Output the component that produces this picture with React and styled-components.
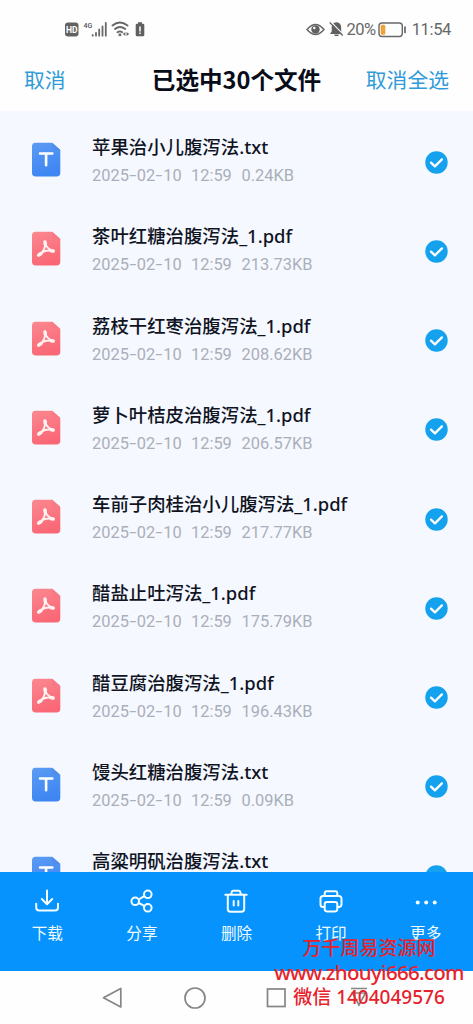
import React from "react";
import styled, { createGlobalStyle } from "styled-components";

const Global = createGlobalStyle`
  * { box-sizing: border-box; }
  html, body { margin: 0; padding: 0; background: #fff; }
  body { font-family: Roboto, "Noto Sans CJK SC", sans-serif; }
  svg { display: block; flex: none; }
`;

const Screen = styled.div`
  position: relative;
  width: 473px;
  height: 1024px;
  overflow: hidden;
  display: flex;
  flex-direction: column;
  background: #fefefe;
`;

const StatusBar = styled.div`
  height: 58px;
  flex: none;
  padding: 1px 22px 0 64px;
  display: flex;
  align-items: center;
  justify-content: space-between;
  color: #686868;
`;

const StatusGroup = styled.div`
  display: flex;
  align-items: center;
`;

const StatusText = styled.span`
  font-size: 16.5px;
  line-height: 20px;
  padding-top: 1px;
  letter-spacing: ${(p) => p.$spacing || "0"};
  margin: 0 ${(p) => p.$after || "0"} 0 ${(p) => p.$gap};
  white-space: nowrap;
`;

const Header = styled.header`
  height: 53px;
  flex: none;
  padding: 0 24px 11px;
  display: flex;
  align-items: center;
  justify-content: space-between;
`;

const HeaderAction = styled.button`
  width: 84px;
  border: 0;
  padding: 0;
  background: none;
  font: 400 20.8px/30px "Noto Sans CJK SC", sans-serif;
  color: #2f9bd9;
  text-align: ${(p) => p.$align};
  white-space: nowrap;
`;

const Title = styled.h1`
  margin: 0;
  font: 700 23.6px/32px "Noto Sans CJK SC", sans-serif;
  color: #080c18;
  white-space: nowrap;
`;

const FileList = styled.main`
  height: 761px;
  flex: none;
  overflow: hidden;
  background: #f5f8ff;
`;

const FileRow = styled.div`
  height: 89.25px;
  padding: 0 25px 0 31px;
  display: flex;
  align-items: flex-start;
`;

const FileIcon = styled.div`
  margin-top: 31px;
  width: 61px;
  flex: none;
`;

const FileInfo = styled.div`
  flex: 1;
  padding-top: 21px;
`;

const FileName = styled.div`
  height: 28px;
  font: 500 18.4px/28px "Noto Sans CJK SC", sans-serif;
  color: #10141f;
  white-space: nowrap;
`;

const Extension = styled.span`
  font-family: "Noto Sans", sans-serif;
  font-weight: 500;
`;

const Meta = styled.div`
  margin-top: 6px;
  display: grid;
  grid-template-columns: 99px 50.5px auto;
  font: 400 16.4px/20px Roboto, sans-serif;
  color: #aaafb9;
  white-space: nowrap;
`;

const Dash = styled.span`
  display: inline-block;
  width: 8px;
  text-align: center;
  transform: scaleX(1.5);
`;

const Check = styled.div`
  margin-top: 39.500px;
`;

const Toolbar = styled.nav`
  height: 99px;
  flex: none;
  display: grid;
  grid-template-columns: repeat(5, 1fr);
  background: #0693fe;
`;

const ToolButton = styled.button`
  border: 0;
  padding: 16px 0 0;
  background: none;
  display: flex;
  flex-direction: column;
  align-items: center;
  gap: 6px;
  color: #f0fbff;
  font: 400 15.6px/24px "Noto Sans CJK SC", sans-serif;
`;

const SystemNav = styled.div`
  flex: 1;
  padding: 0 103px 0 101px;
  display: grid;
  grid-template-columns: 81.5px 82.5px 83px auto;
  align-items: center;
`;

const Watermark = styled.div`
  position: absolute;
  left: 274px;
  top: 936px;
  width: 190px;
  display: flex;
  flex-direction: column;
  align-items: center;
  color: #e6222b;
  white-space: nowrap;
`;

const MarkLine = styled.div`
  font: ${(p) => p.$weight || 500} ${(p) => p.$size}/24.300px "Noto Sans", "Noto Sans CJK SC", sans-serif;
  letter-spacing: ${(p) => p.$spacing || "0"};
`;

const files = [
  ["苹果治小儿腹泻法", "txt", "0.24KB"],
  ["茶叶红糖治腹泻法", "pdf", "213.73KB"],
  ["荔枝干红枣治腹泻法", "pdf", "208.62KB"],
  ["萝卜叶桔皮治腹泻法", "pdf", "206.57KB"],
  ["车前子肉桂治小儿腹泻法", "pdf", "217.77KB"],
  ["醋盐止吐泻法", "pdf", "175.79KB"],
  ["醋豆腐治腹泻法", "pdf", "196.43KB"],
  ["馒头红糖治腹泻法", "txt", "0.09KB"],
  ["高粱明矾治腹泻法", "txt", null],
];

const DocIcon = ({ type }) => {
  const pdf = type === "pdf";
  const id = pdf ? "docPdf" : "docTxt";
  return (
    <svg width="30" height="35" viewBox="0 0 30 35">
      <defs>
        <linearGradient id={id} x1="0" y1="0" x2="0.3" y2="1">
          <stop offset="0" stopColor={pdf ? "#fb8890" : "#5b9bf3"} />
          <stop offset="1" stopColor={pdf ? "#fa6876" : "#3e86f2"} />
        </linearGradient>
      </defs>
      <path d="M4.5.8H21.200L29.300 8V30.800a3.800 3.800 0 0 1-3.800 3.800H4.800A3.800 3.800 0 0 1 1 30.800V4.600A3.800 3.800 0 0 1 4.500.8Z" fill={`url(#${id})`} />
      <path d="M21.200.8 29.300 8h-5.800a2.300 2.300 0 0 1-2.300-2.300Z" fill={pdf ? "#f77984" : "#4f8ee8"} />
      {pdf ? (
        <g fill="none" stroke="#fff3f2" strokeLinecap="round" strokeLinejoin="round">
          <path d="M14 10.700C14.700 15.500 17 18.600 22.300 19.900M14 10.700C15 15.500 12.500 21.500 7.800 24.200M7.800 24.200C11 20.700 16 18.800 22.300 19.900" strokeWidth="1.900" />
          <path d="M14 10.900l.3 2.500M7.700 24.200l2.300-1.700M20.200 19.800l2 .3" strokeWidth="3.500" />
        </g>
      ) : (
        <path d="M9 11.500H21.300M15.100 11.500V23.300" fill="none" stroke="#fff" strokeWidth="2.600" strokeLinecap="round" />
      )}
    </svg>
  );
};

const CheckIcon = () => (
  <svg width="23" height="23" viewBox="0 0 23 23">
    <circle cx="11.5" cy="11.5" r="11.2" fill="#14a1ee" />
    <path d="M6 11.600l3.900 3.800 7-7" fill="none" stroke="#fff" strokeWidth="2.300" strokeLinecap="round" strokeLinejoin="round" />
  </svg>
);

const toolProps = { width: 26, height: 26, viewBox: "0 0 26 26", fill: "none", stroke: "#f4fdff", strokeWidth: 2, strokeLinecap: "round", strokeLinejoin: "round" };

const tools = [
  ["下载", <path key="d" d="M13 2.500V16M7.800 11l5.200 5.200 5.200-5.200M2.200 15.800v3.700a3 3 0 0 0 3 3H21a3 3 0 0 0 3-3v-3.700" />],
  ["分享", <g key="s"><circle cx="6.200" cy="13.300" r="3.800" /><circle cx="18.800" cy="6.300" r="3.800" /><circle cx="18.800" cy="19.800" r="3.800" /><path d="M9.700 11.500l5.600-3.300M9.700 15l5.700 2.900" /></g>],
  ["删除", <path key="t" d="M2.300 6.700H23.700M8 6.500l.8-2.600a1.500 1.500 0 0 1 1.400-1.100h5.600a1.500 1.500 0 0 1 1.400 1.100l.8 2.600M4.800 7v14a2.800 2.800 0 0 0 2.800 2.800h10.800a2.800 2.800 0 0 0 2.800-2.800V7M10.700 13v4.500M15.300 13v4.500" />],
  ["打印", <g key="p"><path d="M6.700 8V5.200a2 2 0 0 1 2-2h8.600a2 2 0 0 1 2 2V8M6.300 19H5a2.500 2.500 0 0 1-2.500-2.500v-6A2.500 2.500 0 0 1 5 8h16a2.500 2.500 0 0 1 2.500 2.500v6A2.500 2.500 0 0 1 21 19h-1.300" /><rect x="6.700" y="14" width="12.600" height="9.400" rx="2.300" /></g>],
  ["更多", <g key="m" fill="#f4fdff" stroke="none"><circle cx="4.700" cy="14.500" r="2" /><circle cx="13.200" cy="14.500" r="2" /><circle cx="21.700" cy="14.500" r="2" /></g>],
];

const SignalIcons = () => (
  <svg width="84" height="22" viewBox="64 19 84 22">
    <rect x="65" y="22.500" width="13.500" height="14" rx="3" fill="#626262" />
    <text x="71.700" y="32.800" textAnchor="middle" fontFamily="Roboto, sans-serif" fontWeight="700" fontSize="8.500" fill="#fff">HD</text>
    <text x="83.500" y="27.500" fontFamily="Roboto, sans-serif" fontWeight="500" fontSize="7" fill="#555">4G</text>
    <path d="M92.700 35v.7M96 33v2.700M99.200 29.500v6.200M102.500 26.500v9.200M105.800 23v12.700" stroke="#686868" strokeWidth="1.800" strokeLinecap="round" />
    <g fill="none" stroke="#686868" strokeWidth="1.900" strokeLinecap="round">
      <path d="M112.500 25.500q7.300-5.800 15 0M115 29q5-4 10.200 0M117.500 32.200q2.500-1.700 4.700 0" />
      <circle cx="119.900" cy="34.800" r=".6" />
    </g>
    <path d="M122.800 34l2.600-1.900v3.800zM129.200 34l-2.600-1.900v3.800z" fill="#686868" />
    <path d="M138 22.300h4v1.500h1a1.300 1.300 0 0 1 1.300 1.300v9.800a1.300 1.300 0 0 1-1.300 1.300h-6a1.300 1.300 0 0 1-1.300-1.300v-9.800a1.300 1.300 0 0 1 1.300-1.300h1z" fill="#606060" />
    <path d="M140 27v4M140 33v.4" stroke="#fff" strokeWidth="1.500" strokeLinecap="round" />
  </svg>
);

const EyeBell = () => (
  <svg width="38" height="20" viewBox="304 20 38 20">
    <path d="M305 29.500q8.500-10 17 0-8.500 10-17 0z" fill="none" stroke="#686868" strokeWidth="1.500" />
    <circle cx="313.500" cy="29.500" r="4.200" fill="#606060" />
    <circle cx="312.300" cy="28" r="1.200" fill="#fff" />
    <path d="M334.500 22.200c3.500.3 4.700 2.800 4.700 5.500v3.800l1.800 2.500h-13l1.700-2.500v-3.800c0-2.700 1.300-5.200 4.800-5.500z" fill="#606060" />
    <path d="M332.500 35.300h4" stroke="#606060" strokeWidth="1.500" />
    <path d="M328.700 21.700l13 13.300" stroke="#fff" strokeWidth="1.300" />
    <path d="M327.700 22.500l13 13" stroke="#606060" strokeWidth="1.300" />
  </svg>
);

const BatteryIcon = () => (
  <svg width="29" height="16" viewBox="0 0 29 16">
    <rect x="1" y="1" width="23.300" height="13.500" rx="3" fill="none" stroke="#686868" strokeWidth="1.400" />
    <rect x="2.700" y="2.700" width="4.600" height="10" rx="1.500" fill="#efa33a" />
    <path d="M27 5v5.500" stroke="#686868" strokeWidth="1.700" strokeLinecap="round" />
  </svg>
);

export default function App() {
  return (
    <Screen>
      <Global />
      <StatusBar>
        <SignalIcons />
        <StatusGroup>
          <EyeBell />
          <StatusText $gap="3px" $spacing="-0.5px" $after="2px">20%</StatusText>
          <BatteryIcon />
          <StatusText $gap="5px" $spacing="-0.35px">11:54</StatusText>
        </StatusGroup>
      </StatusBar>
      <Header>
        <HeaderAction $align="left">取消</HeaderAction>
        <Title>已选中30个文件</Title>
        <HeaderAction $align="right">取消全选</HeaderAction>
      </Header>
      <FileList>
        {files.map(([name, type, size]) => (
          <FileRow key={name}>
            <FileIcon><DocIcon type={type} /></FileIcon>
            <FileInfo>
              <FileName>
                {name}
                <Extension>{type === "pdf" ? "_1.pdf" : ".txt"}</Extension>
              </FileName>
              {size && (
                <Meta>
                  <span>2025<Dash>-</Dash>02<Dash>-</Dash>10</span>
                  <span>12:59</span>
                  <span>{size}</span>
                </Meta>
              )}
            </FileInfo>
            <Check><CheckIcon /></Check>
          </FileRow>
        ))}
      </FileList>
      <Toolbar>
        {tools.map(([label, icon]) => (
          <ToolButton key={label}>
            <svg {...toolProps}>{icon}</svg>
            {label}
          </ToolButton>
        ))}
      </Toolbar>
      <SystemNav>
        <svg width="22" height="24" viewBox="0 0 22 24"><path d="M19.800 2.500v18.500L2.500 11.800z" fill="none" stroke="#858585" strokeWidth="1.700" strokeLinejoin="round" /></svg>
        <svg width="24" height="24" viewBox="0 0 24 24"><circle cx="12" cy="12" r="10" fill="none" stroke="#858585" strokeWidth="1.700" /></svg>
        <svg width="22" height="24" viewBox="0 0 22 24"><rect x="2.500" y="3" width="17.500" height="17.500" fill="none" stroke="#858585" strokeWidth="1.700" /></svg>
        <svg width="20" height="24" viewBox="0 0 20 24"><path d="M3 2.500h16M4.500 7h13L11 19z" fill="none" stroke="#858585" strokeWidth="1.700" /></svg>
      </SystemNav>
      <Watermark>
        <MarkLine $size="19px">万千周易资源网</MarkLine>
        <MarkLine $size="20.500px" $spacing="-0.700px">www.zhouyi666.com</MarkLine>
        <MarkLine $size="19px">微信 1404049576</MarkLine>
      </Watermark>
    </Screen>
  );
}
